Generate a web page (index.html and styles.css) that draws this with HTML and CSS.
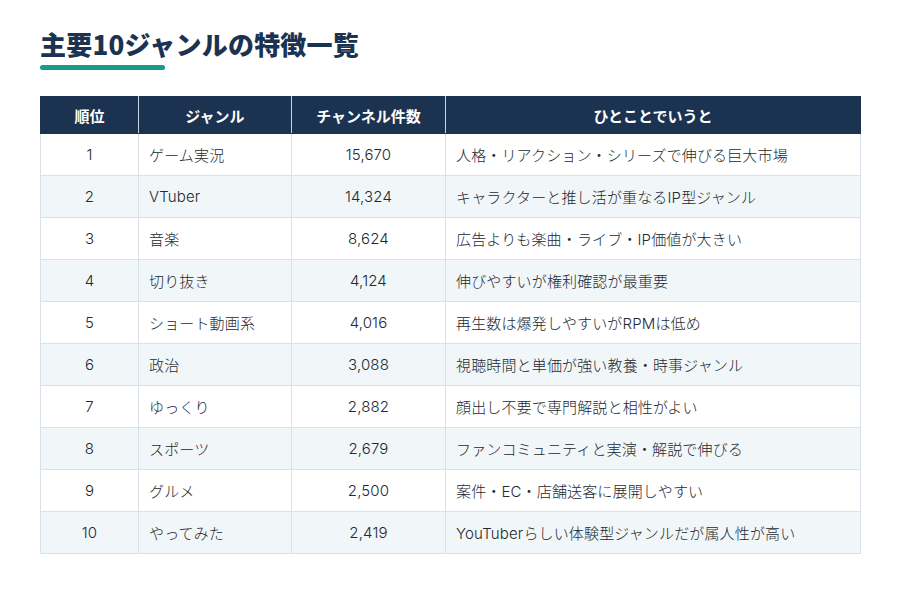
FILE: index.html
```html
<!DOCTYPE html>
<html lang="ja">
<head>
<meta charset="utf-8">
<link rel="stylesheet" href="styles.css">
</head>
<body>
<main class="page">
  <h1 class="title">主要10ジャンルの特徴一覧</h1>
  <div class="title-bar"></div>
  <table class="genre-table">
    <colgroup>
      <col class="c-rank"><col class="c-genre"><col class="c-count"><col class="c-desc">
    </colgroup>
    <thead>
      <tr><th>順位</th><th>ジャンル</th><th>チャンネル件数</th><th>ひとことでいうと</th></tr>
    </thead>
    <tbody>
      <tr><td class="center">1</td><td>ゲーム実況</td><td class="center">15,670</td><td>人格・リアクション・シリーズで伸びる巨大市場</td></tr>
      <tr><td class="center">2</td><td>VTuber</td><td class="center">14,324</td><td>キャラクターと推し活が重なるIP型ジャンル</td></tr>
      <tr><td class="center">3</td><td>音楽</td><td class="center">8,624</td><td>広告よりも楽曲・ライブ・IP価値が大きい</td></tr>
      <tr><td class="center">4</td><td>切り抜き</td><td class="center">4,124</td><td>伸びやすいが権利確認が最重要</td></tr>
      <tr><td class="center">5</td><td>ショート動画系</td><td class="center">4,016</td><td>再生数は爆発しやすいがRPMは低め</td></tr>
      <tr><td class="center">6</td><td>政治</td><td class="center">3,088</td><td>視聴時間と単価が強い教養・時事ジャンル</td></tr>
      <tr><td class="center">7</td><td>ゆっくり</td><td class="center">2,882</td><td>顔出し不要で専門解説と相性がよい</td></tr>
      <tr><td class="center">8</td><td>スポーツ</td><td class="center">2,679</td><td>ファンコミュニティと実演・解説で伸びる</td></tr>
      <tr><td class="center">9</td><td>グルメ</td><td class="center">2,500</td><td>案件・EC・店舗送客に展開しやすい</td></tr>
      <tr><td class="center">10</td><td>やってみた</td><td class="center">2,419</td><td>YouTuberらしい体験型ジャンルだが属人性が高い</td></tr>
    </tbody>
  </table>
</main>
</body>
</html>
```
FILE: styles.css
```css
* { box-sizing: border-box; }
html, body { margin: 0; padding: 0; background: #ffffff; }
body {
  font-family: "Noto Sans CJK JP", "Noto Sans", sans-serif;
  color: #333a42;
}
.page {
  padding: 27px 40px 0 40px;
}
.title {
  margin: 0;
  font-size: 26px;
  line-height: 34px;
  font-weight: 900;
  color: #1b3350;
  letter-spacing: 0.2px;
}
.title-bar {
  width: 125px;
  height: 5px;
  border-radius: 3px;
  background: #169b8d;
  margin-top: 4px;
  margin-bottom: 26px;
}
.genre-table {
  width: 820px;
  border-collapse: collapse;
  table-layout: fixed;
  font-size: 15px;
}
.c-rank { width: 98px; }
.c-genre { width: 153px; }
.c-count { width: 154px; }
.c-desc { width: 415px; }
.genre-table th {
  background: #1b3350;
  color: #ffffff;
  font-weight: 700;
  height: 37px;
  padding: 0 10px;
  text-align: center;
  border: 1px solid #1b3350;
  border-left-color: #c9d3de;
  border-right-color: #c9d3de;
}
.genre-table th:first-child { border-left-color: #1b3350; }
.genre-table th:last-child { border-right-color: #1b3350; }
.genre-table td {
  height: 42px;
  padding: 0 10px;
  border: 1px solid #d9e2eb;
  color: #24292f;
  font-family: "Inter", "Noto Sans CJK JP", sans-serif;
  font-weight: 300;
  letter-spacing: 0.15px;
  white-space: nowrap;
}
.genre-table tbody tr:nth-child(even) td { background: #f1f6f9; }
.genre-table td.center { text-align: center; }
```
